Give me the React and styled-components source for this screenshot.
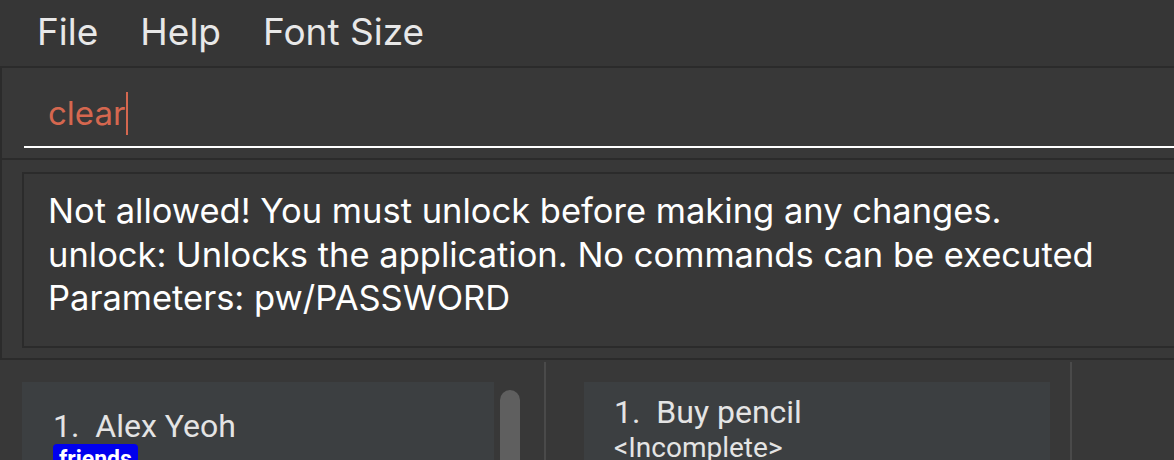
import React from 'react';
import styled, { createGlobalStyle } from 'styled-components';

const Global = createGlobalStyle`
  html, body { margin: 0; padding: 0; background: #383838; overflow: hidden; }
  #root { width: 1174px; height: 460px; }
`;

const Window = styled.div`
  width: 1174px;
  height: 460px;
  overflow: hidden;
  background: #383838;
  display: flex;
  flex-direction: column;
  font-family: Inter, "Noto Sans", sans-serif;
`;

const MenuBar = styled.div`
  flex: none;
  height: 66px;
  box-sizing: border-box;
  padding: 0 0 3px 16px;
  display: flex;
  align-items: center;
  background: #363636;
`;

const MenuItem = styled.div`
  padding: 0 21px;
  font-size: 37px;
  line-height: 1;
  color: #e8e8e8;
`;

const CommandPane = styled.div`
  flex: none;
  height: 92px;
  box-sizing: border-box;
  border-top: 2px solid #2b2b2b;
  border-left: 2px solid #2b2b2b;
  padding: 0 0 10px 22px;
  display: flex;
  flex-direction: column;
`;

const CommandField = styled.div`
  flex: 1;
  border-bottom: 2px solid #ffffff;
  display: flex;
  align-items: center;
  padding: 12px 0 0 24px;
`;

const CommandText = styled.span`
  font-size: 33px;
  line-height: 44px;
  color: #d5674f;
`;

const Caret = styled.span`
  width: 2px;
  height: 43px;
  background: #d5674f;
  margin-left: 1px;
`;

const ResultPane = styled.div`
  flex: none;
  height: 200px;
  box-sizing: border-box;
  border-top: 2px solid #2b2b2b;
  border-left: 2px solid #2b2b2b;
  padding: 12px 0 10px 20px;
  display: flex;
`;

const ResultBox = styled.div`
  flex: 1;
  border: 2px solid #2b2b2b;
  border-right: none;
  padding: 15px 0 0 24px;
  font-size: 34.5px;
  line-height: 43.5px;
  color: #ffffff;
  white-space: nowrap;
`;

const ListArea = styled.div`
  flex: 1;
  border-top: 2px solid #2b2b2b;
  display: flex;
  min-height: 0;
  font-family: Roboto, "Liberation Sans", sans-serif;
`;

const Pane = styled.div`
  flex: none;
  width: ${p => p.$width}px;
  box-sizing: border-box;
  padding: 22px ${p => p.$right}px 0 ${p => p.$left}px;
  display: flex;
  gap: 6px;
  align-items: flex-start;
`;

const Divider = styled.div`
  flex: none;
  width: 2px;
  margin-top: 2px;
  background: #4a4a4a;
`;

const Rest = styled.div`
  flex: 1;
`;

const Card = styled.div`
  flex: 1;
  height: 200px;
  background: #3c3f41;
  box-sizing: border-box;
  padding: ${p => p.$top}px 0 0 ${p => p.$left}px;
  display: flex;
  flex-direction: column;
  align-items: flex-start;
`;

const Name = styled.div`
  font-size: 32px;
  line-height: ${p => p.$lh}px;
  color: #e4e4e4;
  white-space: pre;
`;

const Status = styled.div`
  font-size: 28px;
  line-height: 32px;
  color: #e4e4e4;
`;

const Tag = styled.span`
  background: #0000ee;
  color: #ffffff;
  border-radius: 4px;
  padding: 0 6px;
  font-size: 23px;
  font-weight: 700;
  line-height: 32px;
`;

const Thumb = styled.div`
  flex: none;
  width: 20px;
  height: 120px;
  margin-top: 8px;
  border-radius: 10px;
  background: #5f5f5f;
`;

export default function App() {
  return (
    <>
      <Global />
      <Window>
        <MenuBar>
          <MenuItem>File</MenuItem>
          <MenuItem>Help</MenuItem>
          <MenuItem>Font Size</MenuItem>
        </MenuBar>
        <CommandPane>
          <CommandField>
            <CommandText>clear</CommandText>
            <Caret />
          </CommandField>
        </CommandPane>
        <ResultPane>
          <ResultBox>
            <div>Not allowed! You must unlock before making any changes.</div>
            <div>unlock: Unlocks the application. No commands can be executed</div>
            <div>Parameters: pw/PASSWORD</div>
          </ResultBox>
        </ResultPane>
        <ListArea>
          <Pane $width={544} $left={22} $right={24}>
            <Card $top={26} $left={31}>
              <Name $lh={36}>{'1.  Alex Yeoh'}</Name>
              <Tag>friends</Tag>
            </Card>
            <Thumb />
          </Pane>
          <Divider />
          <Pane $width={524} $left={38} $right={20}>
            <Card $top={11} $left={30}>
              <Name $lh={39}>{'1.  Buy pencil'}</Name>
              <Status>{'<Incomplete>'}</Status>
            </Card>
          </Pane>
          <Divider />
          <Rest />
        </ListArea>
      </Window>
    </>
  );
}
